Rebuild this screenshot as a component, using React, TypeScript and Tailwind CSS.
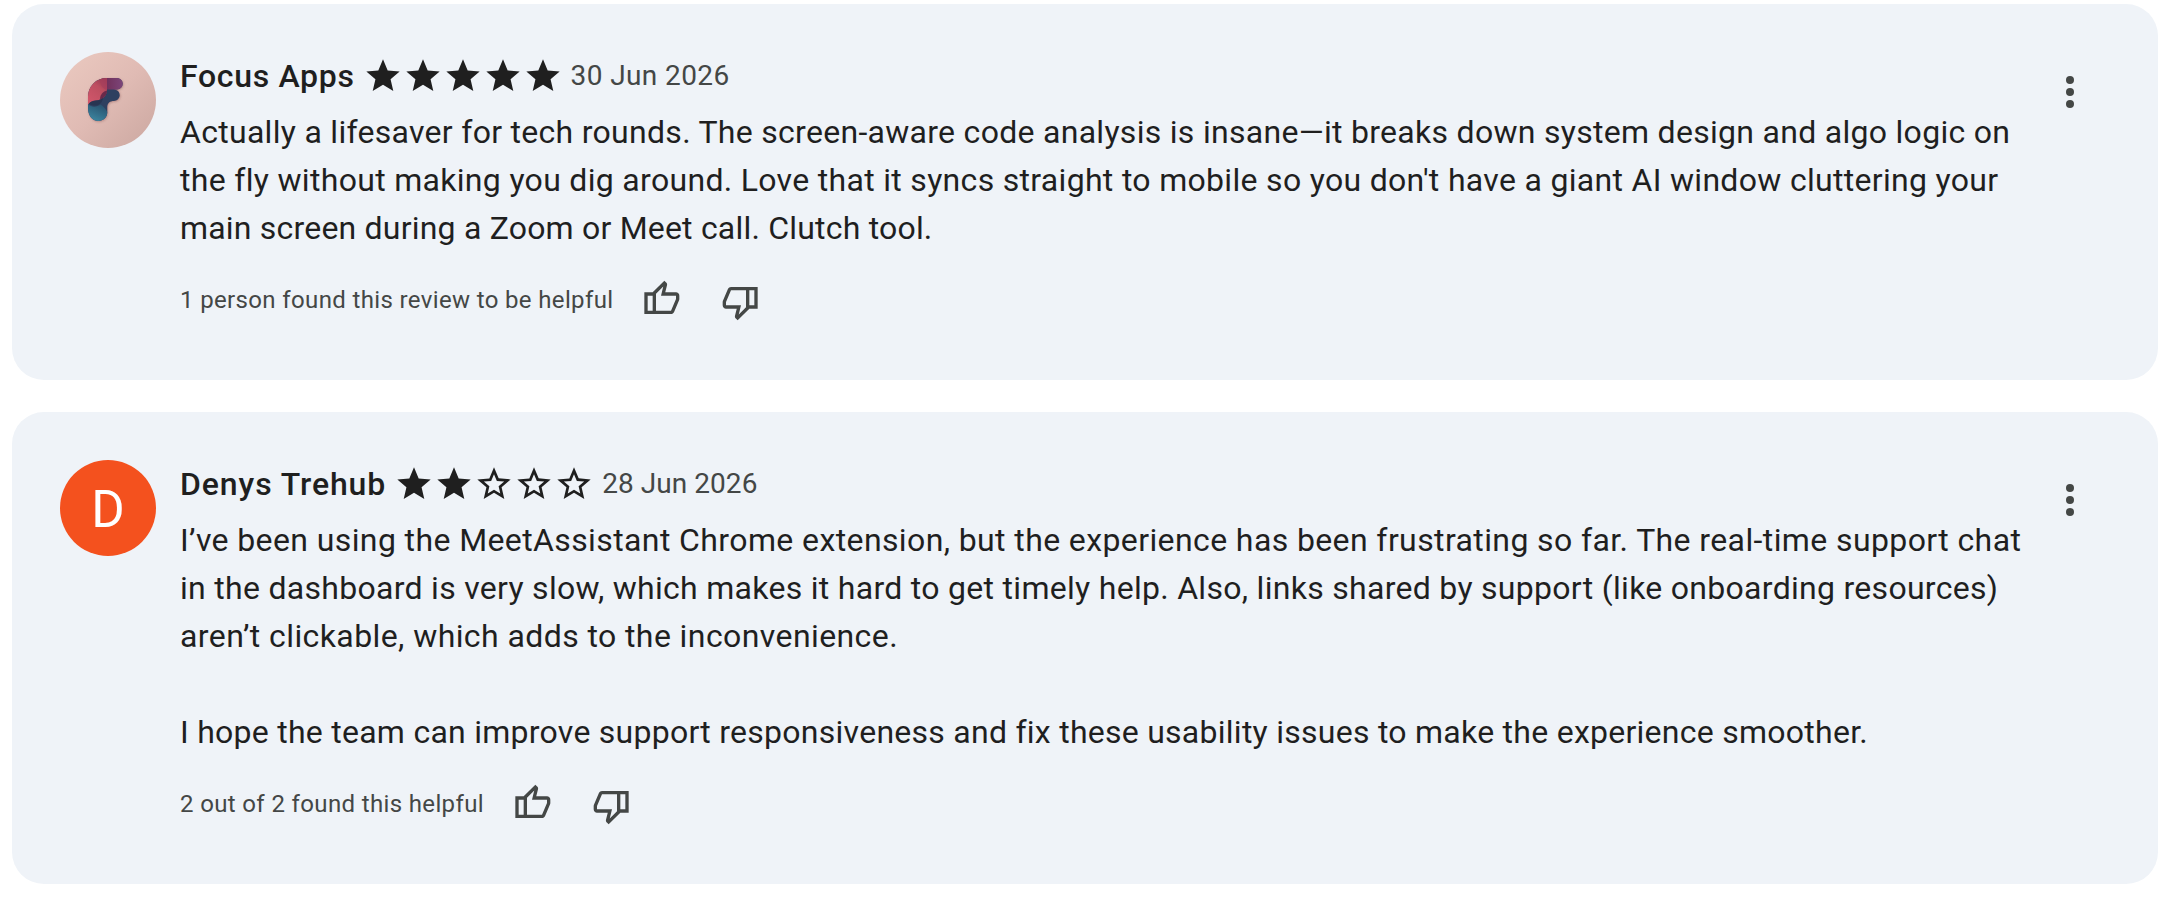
import type { ReactNode } from 'react';

interface TextLine {
  text: string;
  className?: string;
}

interface Review {
  id: number;
  author: TextLine;
  avatar: ReactNode;
  rating: number;
  date: TextLine;
  lines: TextLine[];
  helpful: string;
}

function FocusAppsAvatar() {
  return (
    <svg viewBox="0 0 96 96" className="size-24 shrink-0 rounded-full">
      <defs>
        <linearGradient id="skin" x1="0" y1="0" x2="1" y2="1">
          <stop offset="0.1" stopColor="#e9c7be" />
          <stop offset="0.5" stopColor="#e0bbb4" />
          <stop offset="0.9" stopColor="#cfaba4" />
        </linearGradient>
        <linearGradient id="rose" x1="0.9" y1="0" x2="0.3" y2="1">
          <stop offset="0" stopColor="#8f3650" />
          <stop offset="0.4" stopColor="#bd4e60" />
          <stop offset="1" stopColor="#d0566a" />
        </linearGradient>
        <linearGradient id="plum" x1="0" y1="0" x2="1" y2="0">
          <stop offset="0" stopColor="#70305a" />
          <stop offset="1" stopColor="#7c4579" />
        </linearGradient>
        <linearGradient id="teal" x1="0.8" y1="0" x2="0.3" y2="1">
          <stop offset="0" stopColor="#284e6b" />
          <stop offset="1" stopColor="#3c86a0" />
        </linearGradient>
        <filter id="soft" x="-20%" y="-20%" width="150%" height="150%">
          <feDropShadow dx="0.6" dy="0.8" stdDeviation="0.8" floodColor="#7a4b4b" floodOpacity="0.45" />
        </filter>
      </defs>
      <rect width="96" height="96" fill="url(#skin)" />
      <g filter="url(#soft)">
        <path
          d="M28 45c0-11 8-19 19-19h10a5.700 5.700 0 0 1 0 11.400h-3a5.600 5.600 0 0 1 0 11.600c-4 0-6.700 2-6.700 6.500V60c0 5.500-4 9-8.800 9C32 69 28 63 28 56z"
          fill="#2f3f60"
        />
      </g>
      <path d="M46 26h11a5.700 5.700 0 0 1 0 11.400H46z" fill="url(#plum)" />
      <path d="M28 53v-8c0-11 8-19 19-19v12.500c-.5 6-5 9.500-11 10-4 .3-6.500 1.500-8 4.500z" fill="url(#rose)" />
      <path d="M28 52c4 4 9 3 12.500.5 2.500 1.500 5 4 6.800 7.500 0 5.500-4 9-8.800 9C32 69 28 63 28 56z" fill="url(#teal)" />
      <path d="M40 27.500c0 4.500 2 8.500 7 10.500V26c-2.500 0-5 .4-7 1.500z" fill="#a63f5c" opacity="0.7" />
      <path d="M47 38.500c-4 .8-7 4-7 9 4-1.200 7-4.500 7-9z" fill="#5a2346" opacity="0.85" />
      <path d="M29 51.500c2-2.500 5-3 8-3.200 2.500-.3 4.500-1 6-2.800 0 4-3 7.500-6.500 8-3 .3-6-.4-7.500-2z" fill="#27304d" opacity="0.7" />
    </svg>
  );
}

function LetterAvatar({ letter }: { letter: string }) {
  return (
    <div className="flex size-24 shrink-0 items-center justify-center rounded-full bg-[#f4511e] text-[51px] leading-none text-white">
      <span className="mt-0.5">{letter}</span>
    </div>
  );
}

function Star({ filled }: { filled: boolean }) {
  return (
    <svg viewBox="0 0 24 24" className="size-10 fill-[#1f1f1f]">
      {filled ? (
        <path d="M12 17.270 18.180 21l-1.640-7.030L22 9.240l-7.190-.61L12 2 9.190 8.630 2 9.240l5.460 4.730L5.820 21z" />
      ) : (
        <path d="m22 9.240-7.190-.62L12 2 9.190 8.630 2 9.240l5.460 4.730L5.820 21 12 17.270 18.180 21l-1.630-7.030zM12 15.400l-3.760 2.270 1-4.280-3.320-2.880 4.380-.38L12 6.100l1.710 4.040 4.380.38-3.320 2.880 1 4.280z" />
      )}
    </svg>
  );
}

function ThumbUpIcon() {
  return (
    <svg viewBox="0 -960 960 960" className="size-10 fill-[#444746]">
      <path d="M720-120H280v-520l280-280 50 50q7 7 11.500 19t4.500 23v14l-44 174h258q32 0 56 24t24 56v80q0 7-2 15t-4 15L794-168q-9 20-30 34t-44 14Zm-360-80h360l120-280v-80H480l54-220-174 174v406ZM280-640v80H160v360h120v80H80v-520h200Z" />
    </svg>
  );
}

function ThumbDownIcon() {
  return (
    <svg viewBox="0 -960 960 960" className="size-10 fill-[#444746]">
      <path d="M240-840h440v520L400-40l-50-50q-7-7-11.500-19t-4.500-23v-14l44-174H120q-32 0-56-24t-24-56v-80q0-7 2-15t4-15l120-282q9-20 30-34t44-14Zm360 80H240L120-480v80h360l-54 220 174-174v-406ZM680-320v-80h120v-360H680v-80h200v520H680Z" />
    </svg>
  );
}

function MoreIcon() {
  return (
    <svg viewBox="0 0 24 24" className="size-12 fill-[#444746]">
      <circle cx="12" cy="6" r="2" />
      <circle cx="12" cy="12" r="2" />
      <circle cx="12" cy="18" r="2" />
    </svg>
  );
}

const reviews: Review[] = [
  {
    id: 1,
    author: { text: 'Focus Apps', className: 'tracking-[0.68px]' },
    avatar: <FocusAppsAvatar />,
    rating: 5,
    date: { text: '30 Jun 2026', className: 'tracking-[0.4px]' },
    lines: [
      {
        text: 'Actually a lifesaver for tech rounds. The screen-aware code analysis is insane—it breaks down system design and algo logic on',
        className: 'tracking-[0.29px]',
      },
      {
        text: "the fly without making you dig around. Love that it syncs straight to mobile so you don't have a giant AI window cluttering your",
        className: 'tracking-[0.31px]',
      },
      { text: 'main screen during a Zoom or Meet call. Clutch tool.', className: 'tracking-[0.2px]' },
    ],
    helpful: '1 person found this review to be helpful',
  },
  {
    id: 2,
    author: { text: 'Denys Trehub', className: 'tracking-[0.91px]' },
    avatar: <LetterAvatar letter="D" />,
    rating: 2,
    date: { text: '28 Jun 2026', className: 'tracking-[0.05px]' },
    lines: [
      {
        text: 'I’ve been using the MeetAssistant Chrome extension, but the experience has been frustrating so far. The real-time support chat',
        className: 'tracking-[0.39px]',
      },
      {
        text: 'in the dashboard is very slow, which makes it hard to get timely help. Also, links shared by support (like onboarding resources)',
        className: 'tracking-[0.29px]',
      },
      { text: 'aren’t clickable, which adds to the inconvenience.', className: 'tracking-[0.41px]' },
      { text: '' },
      {
        text: 'I hope the team can improve support responsiveness and fix these usability issues to make the experience smoother.',
        className: 'tracking-[0.26px]',
      },
    ],
    helpful: '2 out of 2 found this helpful',
  },
];

function ReviewCard({ review }: { review: Review }) {
  return (
    <article className="flex items-start rounded-[32px] bg-[#eff3f8] pt-12 pr-16 pb-15 pl-12">
      {review.avatar}

      <div className="ml-6 min-w-0 flex-1 pt-1">
        <header className="flex h-10 items-center gap-2 whitespace-nowrap">
          <h3 className={`text-[32px] leading-10 font-medium ${review.author.className}`}>{review.author.text}</h3>
          <div className="flex">
            {[1, 2, 3, 4, 5].map((n) => (
              <Star key={n} filled={n <= review.rating} />
            ))}
          </div>
          <span className={`text-[28px] leading-10 text-[#444746] ${review.date.className}`}>{review.date.text}</span>
        </header>

        <div className="mt-3 text-[32px] leading-12 whitespace-nowrap">
          {review.lines.map((line, i) => (
            <p key={i} className={`h-12 ${line.className ?? ''}`}>{line.text}</p>
          ))}
        </div>

        <footer className="mt-7 flex h-10 items-center text-[#444746]">
          <span className="text-2xl leading-10 tracking-[0.36px]">{review.helpful}</span>
          <button type="button" className="-mt-0.5 ml-7">
            <ThumbUpIcon />
          </button>
          <button type="button" className="mt-1 ml-10">
            <ThumbDownIcon />
          </button>
        </footer>
      </div>

      <button type="button" className="mt-4 shrink-0">
        <MoreIcon />
      </button>
    </article>
  );
}

export default function App() {
  return (
    <main className="flex min-h-screen flex-col gap-8 bg-white pt-1 pr-[18px] pl-3 font-[Roboto,sans-serif] text-[#1f1f1f]">
      {reviews.map((review) => (
        <ReviewCard key={review.id} review={review} />
      ))}
    </main>
  );
}
